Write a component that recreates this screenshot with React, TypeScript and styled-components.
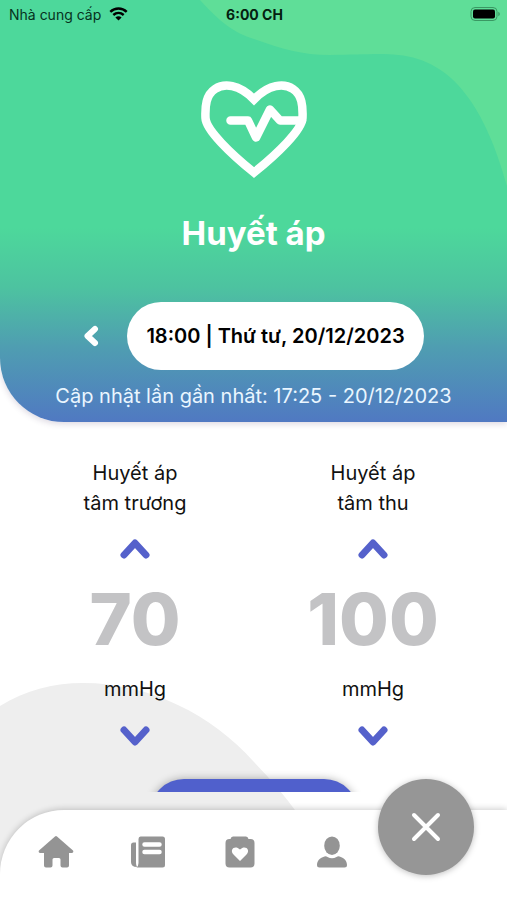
import React, { useState } from "react";
import styled, { createGlobalStyle } from "styled-components";

const GlobalStyle = createGlobalStyle`
  *, *::before, *::after { box-sizing: border-box; }
  body { margin: 0; background: #fff; }
  button { font: inherit; color: inherit; padding: 0; border: 0; background: none; cursor: pointer; }
`;

const Screen = styled.div`
  position: relative;
  display: flex;
  flex-direction: column;
  height: 100vh;
  overflow: hidden;
  background: #fff;
  color: #111;
  font-family: Inter, "Noto Sans", sans-serif;
  font-size: 20px;
`;

const BottomBlob = styled.svg`
  position: absolute;
  left: 0;
  bottom: 0;
`;

const Header = styled.header`
  position: relative;
  display: flex;
  flex-direction: column;
  align-items: center;
  padding-bottom: 12px;
  border-bottom-left-radius: 64px;
  overflow: hidden;
  background: linear-gradient(#4dd89b 0%, #4dd89b 54%, #4dc3a0 68%, #4f9eb1 82%, #5079c2 100%);
`;

const HeaderShadow = styled.div`
  position: relative;
  flex: none;
  border-bottom-left-radius: 64px;
  box-shadow: 0 2px 6px rgba(60, 40, 90, 0.18);
`;

const TopBlob = styled.svg`
  position: absolute;
  top: 0;
  right: 0;
`;

const StatusBar = styled.div`
  position: relative;
  align-self: stretch;
  display: grid;
  grid-template-columns: 1fr auto 1fr;
  align-items: center;
  height: 28px;
  padding: 0 7px 0 9px;
  color: #06321d;
  font-size: 14px;
`;

const Carrier = styled.span`
  display: flex;
  align-items: center;
  gap: 8px;
`;

const Clock = styled.span`
  color: #04200f;
  font-weight: 700;
`;

const BatteryIcon = styled.svg`
  justify-self: end;
`;

const HeartIcon = styled.svg`
  position: relative;
  margin-top: 52px;
`;

const Title = styled.h1`
  margin: 32px 0 0;
  color: #fff;
  font-size: 33px;
  line-height: 42px;
  font-weight: 700;
`;

const DateRow = styled.div`
  display: flex;
  align-items: center;
  gap: 28px;
  margin-top: 48px;
`;

const PreviousButton = styled.button`
  display: flex;
  align-items: center;
  justify-content: center;
  height: 44px;
`;

const DatePill = styled.button`
  height: 68px;
  padding: 0 19px;
  border-radius: 34px;
  background: #fff;
  color: #000;
  font-weight: 600;
  white-space: nowrap;
`;

const Updated = styled.p`
  margin: 12px 0 0;
  color: #eaf6ff;
  line-height: 28px;
`;

const Scroller = styled.main`
  position: relative;
  flex: 1;
  min-height: 0;
  display: flex;
  flex-direction: column;
  align-items: center;
  margin-bottom: 18px;
  padding-top: 36px;
  overflow: hidden;
`;

const Readings = styled.div`
  flex: none;
  align-self: stretch;
  display: grid;
  grid-template-columns: 1fr 1fr;
  padding: 0 15px 0 16px;
`;

const Reading = styled.section`
  display: flex;
  flex-direction: column;
  align-items: center;
  text-align: center;
`;

const ReadingLabel = styled.h2`
  margin: 0;
  font-size: 20px;
  line-height: 30px;
  font-weight: 400;
`;

const StepButton = styled.button`
  display: flex;
  align-items: center;
  justify-content: center;
  width: 60px;
  height: 40px;
`;

const Value = styled.output`
  color: #c3c3c5;
  font-size: 72px;
  line-height: 80px;
  font-weight: 800;
`;

const Unit = styled.span`
  line-height: 30px;
`;

const Gap = styled.div<{ $size: number }>`
  height: ${(p) => p.$size}px;
`;

const SaveButton = styled.button`
  flex: none;
  width: 208px;
  height: 68px;
  margin-top: 23px;
  border-radius: 34px;
  background: #5060cc;
  box-shadow: 0 0 8px rgba(0, 0, 0, 0.3);
`;

const TabBar = styled.nav`
  position: relative;
  flex: none;
  display: grid;
  grid-template-columns: repeat(4, 1fr) 96px;
  align-items: center;
  height: 90px;
  padding: 0 33px 0 10px;
  border-top-left-radius: 64px;
  background: #fff;
  box-shadow: 0 -1px 6px rgba(0, 0, 0, 0.2);
`;

const Tab = styled.a`
  justify-self: center;
  display: flex;
  align-items: center;
  justify-content: center;
  width: 48px;
  height: 48px;
  margin-bottom: 6px;
`;

const CloseButton = styled.button`
  display: flex;
  align-items: center;
  justify-content: center;
  width: 96px;
  height: 96px;
  margin-top: -57px;
  border-radius: 50%;
  background: #969696;
  box-shadow: 0 1px 6px rgba(0, 0, 0, 0.25);
`;

const GREY = "#949494";

function Chevron({ down = false }: { down?: boolean }) {
  return (
    <svg width="30" height="22" viewBox="0 0 30 22" fill="none" stroke="#5561cb" strokeWidth="7" strokeLinecap="round" strokeLinejoin="round" aria-hidden="true">
      <path d={down ? "M4 5 15 17 26 5" : "M4 17 15 5 26 17"} />
    </svg>
  );
}

interface ReadingProps {
  site: string;
  initial: number;
}

function PressureReading({ site, initial }: ReadingProps) {
  const [value, setValue] = useState(initial);
  return (
    <Reading>
      <ReadingLabel>
        Huyết áp
        <br />
        {site}
      </ReadingLabel>
      <Gap $size={11} />
      <StepButton type="button" aria-label="Tăng" onClick={() => setValue(value + 1)}>
        <Chevron />
      </StepButton>
      <Gap $size={10} />
      <Value>{value}</Value>
      <Gap $size={15} />
      <Unit>mmHg</Unit>
      <Gap $size={12} />
      <StepButton type="button" aria-label="Giảm" onClick={() => setValue(value - 1)}>
        <Chevron down />
      </StepButton>
    </Reading>
  );
}

export default function App() {
  return (
    <>
      <GlobalStyle />
      <Screen>
        <BottomBlob width="310" height="217" viewBox="0 0 310 217" aria-hidden="true">
          <path d="M0 23C25 7 55 0 83 0C150 0 212 32 254 79C272 98 285 113 298 131V217H0Z" fill="#eee" />
        </BottomBlob>

        <HeaderShadow>
          <Header>
            <TopBlob width="307" height="190" viewBox="0 0 307 190" aria-hidden="true">
              <path d="M0 0C20 22 34 33 54 39C82 49 102 55 130 55C160 55 180 53 198 55C254 60 286 110 307 186V0Z" fill="#5fde98" />
            </TopBlob>

            <StatusBar>
              <Carrier>
                Nhà cung cấp
                <svg width="19" height="14" viewBox="0 0 19 14" fill="none" stroke="#000" aria-label="Wi-Fi">
                  <path d="M1.3 4.8C6 .4 13 .4 17.7 4.8" strokeWidth="2.5" />
                  <path d="M4.3 8C7.4 5.2 11.6 5.2 14.7 8" strokeWidth="2.4" />
                  <path d="M9.5 13.6 6.4 10.4C8.2 8.9 10.8 8.9 12.6 10.4Z" fill="#000" stroke="none" />
                </svg>
              </Carrier>
              <Clock>6:00 CH</Clock>
              <BatteryIcon width="30" height="14" viewBox="0 0 30 14" aria-label="Pin">
                <rect x="1" y=".5" width="26" height="13" rx="4" fill="none" stroke="#3a9863" />
                <rect x="3" y="2.5" width="22" height="9" rx="2" fill="#000" />
                <path d="M28.3 4.7V9.3C30.3 8.3 30.3 5.7 28.3 4.7Z" fill="#3a9863" />
              </BatteryIcon>
            </StatusBar>

            <HeartIcon width="108" height="100" viewBox="0 0 108 100" fill="none" stroke="#fff" strokeWidth="8.5" aria-hidden="true">
              <path d="M54 19.5C39 4 24 3 15 9C6 15 5 26 5.500 38C6 50 31 74 54 92.500C77 74 102 50 102.500 38C103 26 102 15 93 9C84 3 69 4 54 19.5Z" />
              <path d="M30.500 40.500H48L56 57.500L70 29.500L80 40.500H102" strokeWidth="8.5" strokeLinecap="round" strokeLinejoin="round" />
            </HeartIcon>

            <Title>Huyết áp</Title>

            <DateRow>
              <PreviousButton type="button" aria-label="Trước">
                <svg width="16" height="22" viewBox="0 0 16 22" fill="none" stroke="#fff" strokeWidth="6" strokeLinecap="round" strokeLinejoin="round" aria-hidden="true">
                  <path d="M12 4 4.500 11 12 18" />
                </svg>
              </PreviousButton>
              <DatePill type="button">18:00 | Thứ tư, 20/12/2023</DatePill>
            </DateRow>

            <Updated>Cập nhật lần gần nhất: 17:25 - 20/12/2023</Updated>
          </Header>
        </HeaderShadow>

        <Scroller>
          <Readings>
            <PressureReading site="tâm trương" initial={70} />
            <PressureReading site="tâm thu" initial={100} />
          </Readings>
          <SaveButton type="button" aria-label="Lưu" />
        </Scroller>

        <TabBar>
          <Tab href="#home" aria-label="Trang chủ">
            <svg width="36" height="32" viewBox="0 0 36 32" fill={GREY} aria-hidden="true">
              <path d="M17 .5Q18 -.3 19 .5L35 14.500Q36 16.500 34 17H31V29.500Q31 31.500 29 31.500H24.500Q22.500 31.500 22.500 29.500V23.500Q22.500 22 21 22H16Q14.500 22 14.500 23.500V29.500Q14.500 31.500 12.500 31.500H8Q6 31.500 6 29.500V17H2Q0 16.500 1 14.500Z" />
            </svg>
          </Tab>
          <Tab href="#news" aria-label="Tin tức">
            <svg width="34" height="32" viewBox="0 0 34 32" aria-hidden="true">
              <path d="M5 6.500V27Q5 29 6 31Q0 31 0 26V9Q0 6.500 2.500 6.500Z" fill={GREY} />
              <path d="M9.500 .5H31.500Q34 .5 34 3V29Q34 31.500 31.500 31.500H5.500Q7.500 30 7.500 27V3Q7.500 .5 9.500 .5Z" fill={GREY} />
              <path d="M13.500 8.500H28.500M13.500 16H28.500" stroke="#fff" strokeWidth="4.5" strokeLinecap="round" />
            </svg>
          </Tab>
          <Tab href="#health" aria-label="Sức khỏe">
            <svg width="30" height="32" viewBox="0 0 30 32" aria-hidden="true">
              <path d="M8 .5H21Q23 .5 23.500 3H25.500Q29.500 3 29.500 7V27.500Q29.500 31.500 25.500 31.500H4.500Q.5 31.500 .5 27.500V7Q.5 3 4.500 3H5.500Q6 .5 8 .5Z" fill={GREY} />
              <path d="M15 25 8.500 18.500C4 13.500 10 8.500 15 13.500C20 8.500 26 13.500 21.500 18.500Z" fill="#fff" />
            </svg>
          </Tab>
          <Tab href="#profile" aria-label="Hồ sơ">
            <svg width="32" height="32" viewBox="0 0 32 32" fill={GREY} aria-hidden="true">
              <ellipse cx="16" cy="9.700" rx="7.800" ry="9.300" />
              <path d="M8.500 20.500Q10 20 11.500 21Q16 23.500 20.500 21Q22 20 23.500 20.500C29 22 31 25.500 31 29Q31 31.500 28.500 31.500H3.500Q1 31.500 1 29C1 25.500 3 22 8.500 20.500Z" />
            </svg>
          </Tab>
          <CloseButton type="button" aria-label="Đóng">
            <svg width="30" height="30" viewBox="0 0 30 30" stroke="#fff" strokeWidth="4" strokeLinecap="round" aria-hidden="true">
              <path d="M3 3 27 27M27 3 3 27" />
            </svg>
          </CloseButton>
        </TabBar>
      </Screen>
    </>
  );
}
